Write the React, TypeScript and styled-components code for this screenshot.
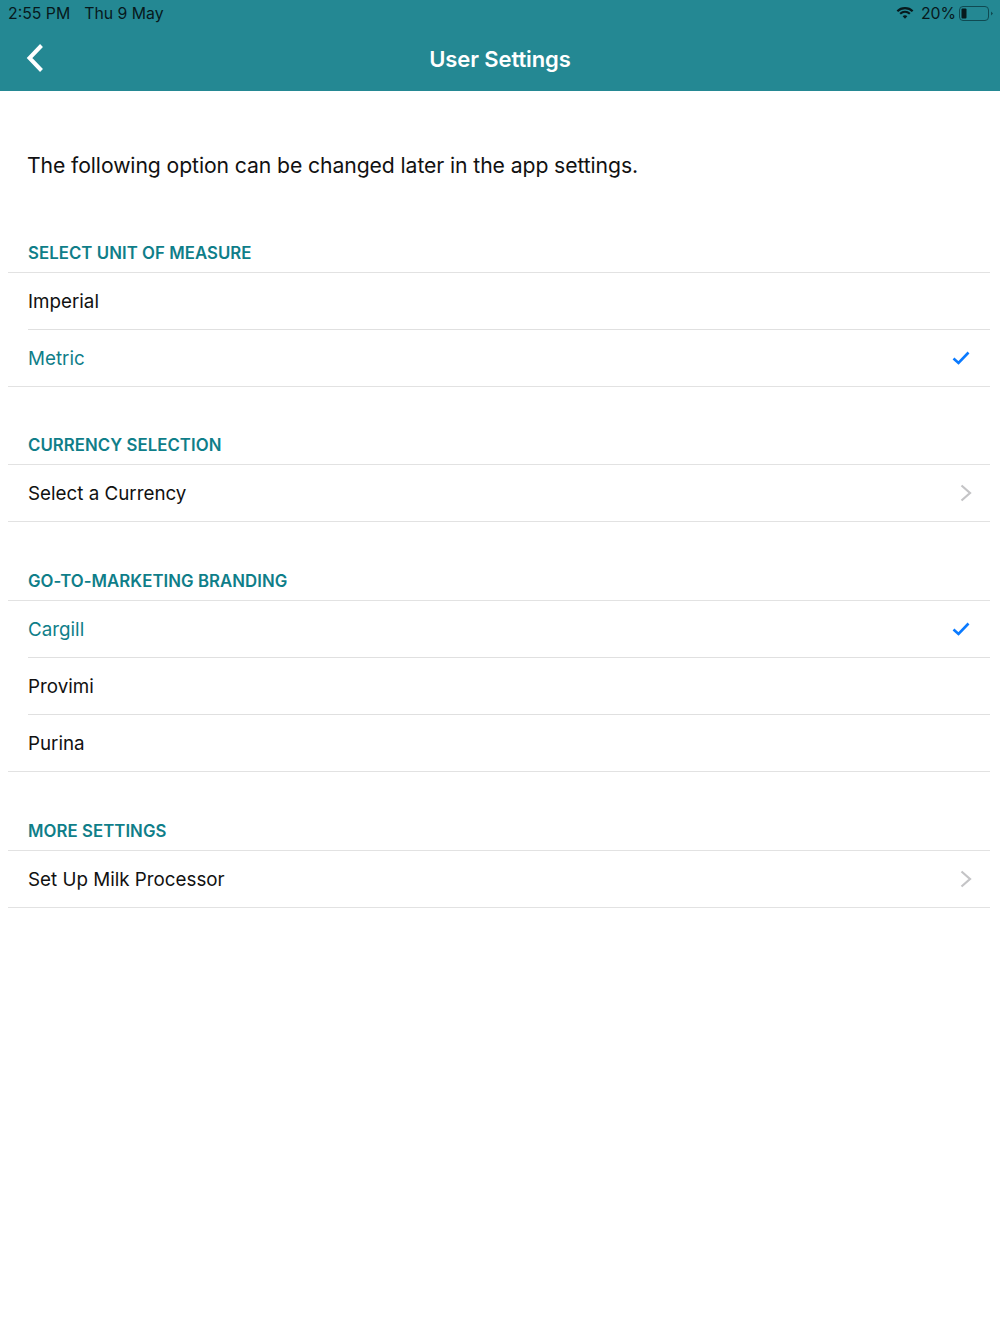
import React from 'react';
import styled, { createGlobalStyle } from 'styled-components';

const GlobalStyle = createGlobalStyle`
  html, body {
    margin: 0;
    padding: 0;
    background: #fff;
    font-family: Inter, "Noto Sans", sans-serif;
  }
`;

const Page = styled.div`
  width: 1000px;
  height: 1334px;
  background: #fff;
  overflow: hidden;
`;

const Header = styled.header`
  height: 91px;
  background: #248893;
  box-sizing: border-box;
  display: flex;
  flex-direction: column;
`;

const StatusBar = styled.div`
  height: 26px;
  padding: 0 7px 0 8px;
  display: flex;
  align-items: center;
  justify-content: space-between;
  font-size: 15.8px;
  color: #07191c;
`;

const StatusGroup = styled.div`
  display: flex;
  align-items: center;
  gap: 14px;
`;

const StatusRight = styled.div`
  display: flex;
  align-items: center;
  gap: 3px;
`;

const WifiSlot = styled.div`
  display: flex;
  margin-right: 4px;
`;

const NavBar = styled.div`
  flex: 1;
  display: grid;
  grid-template-columns: 1fr auto 1fr;
  align-items: center;
  padding: 0 26px 0 26px;
`;

const BackButton = styled.div`
  display: flex;
  align-items: center;
  margin-top: -1px;
`;

const Title = styled.h1`
  margin: 0;
  font-size: 22px;
  font-weight: 600;
  color: #fff;
  letter-spacing: -0.1px;
`;

const Intro = styled.p`
  margin: 0;
  padding: 60px 27px 0;
  height: 91px;
  box-sizing: content-box;
  font-size: 21.2px;
  line-height: 28px;
  color: #111;
  letter-spacing: -0.1px;
`;

const Sections = styled.div`
  display: flex;
  flex-direction: column;
  gap: 47px;
  padding: 0 10px 0 8px;
`;

const SectionBlock = styled.section`
  &:nth-child(n + 3) {
    margin-top: 1px;
  }
`;

const SectionTitle = styled.div`
  padding: 0 20px;
  height: 30px;
  line-height: 22px;
  font-size: 16.8px;
  font-weight: 600;
  color: #0f7e89;
  letter-spacing: 0.05px;
`;

const List = styled.div`
  border-top: 1px solid #e2e2e2;
  border-bottom: 1px solid #e2e2e2;
`;

const Row = styled.div<{ $selected?: boolean }>`
  height: 56px;
  box-sizing: border-box;
  margin-left: 20px;
  padding-right: 20px;
  display: flex;
  align-items: center;
  justify-content: space-between;
  font-size: 18.8px;
  color: ${(p) => (p.$selected ? '#0f7e89' : '#111')};
  & + & {
    border-top: 1px solid #e0e0e0;
    height: 57px;
  }
`;

const Check = () => (
  <svg width="18" height="14" viewBox="0 0 18 14" fill="none" style={{ display: 'block' }}>
    <path d="M1.5 7.5 L6.5 12 L16.5 1.5" stroke="#0a7aff" strokeWidth="2.6" />
  </svg>
);

const Chevron = () => (
  <svg width="12" height="18" viewBox="0 0 12 18" fill="none" style={{ marginRight: -2 }}>
    <path d="M1.5 1.5 L10 9 L1.5 16.5" stroke="#c4c4c6" strokeWidth="2.2" />
  </svg>
);

const BackIcon = () => (
  <svg width="18" height="30" viewBox="0 0 18 30" fill="none" style={{ display: 'block' }}>
    <path d="M15.5 2.5 L3.5 15 L15.5 27.5" stroke="#fff" strokeWidth="4" />
  </svg>
);

const WifiIcon = () => (
  <svg width="18" height="14" viewBox="0 0 20 15" fill="none" style={{ display: 'block' }}>
    <path d="M1.5 5.5 C6 1 14 1 18.5 5.5" stroke="#07191c" strokeWidth="2.4" />
    <path d="M4.6 8.4 C7.8 5.6 12.2 5.6 15.4 8.4" stroke="#07191c" strokeWidth="2.4" />
    <path d="M7.4 11 C8.9 9.8 11.1 9.8 12.6 11 L10 13.8 Z" fill="#07191c" />
  </svg>
);

const BatteryIcon = () => (
  <svg width="34" height="15" viewBox="0 0 34 15" fill="none" style={{ display: 'block' }}>
    <rect x="0.5" y="0.5" width="29" height="14" rx="3.5" stroke="#0f4a52" />
    <rect x="2.5" y="2.5" width="5" height="10" rx="1" fill="#07191c" />
    <path d="M32 5.5 L34 7.5 L32 9.5 Z" fill="#0f4a52" />
  </svg>
);

type Item = { label: string; selected?: boolean; accessory?: 'check' | 'chevron' };
type Section = { title: string; items: Item[] };

const sections: Section[] = [
  {
    title: 'SELECT UNIT OF MEASURE',
    items: [{ label: 'Imperial' }, { label: 'Metric', selected: true, accessory: 'check' }]
  },
  {
    title: 'CURRENCY SELECTION',
    items: [{ label: 'Select a Currency', accessory: 'chevron' }]
  },
  {
    title: 'GO-TO-MARKETING BRANDING',
    items: [
      { label: 'Cargill', selected: true, accessory: 'check' },
      { label: 'Provimi' },
      { label: 'Purina' }
    ]
  },
  {
    title: 'MORE SETTINGS',
    items: [{ label: 'Set Up Milk Processor', accessory: 'chevron' }]
  }
];

const App: React.FC = () => (
  <Page>
    <GlobalStyle />
    <Header>
      <StatusBar>
        <StatusGroup>
          <span>2:55 PM</span>
          <span>Thu 9 May</span>
        </StatusGroup>
        <StatusRight>
          <WifiSlot>
            <WifiIcon />
          </WifiSlot>
          <span>20%</span>
          <BatteryIcon />
        </StatusRight>
      </StatusBar>
      <NavBar>
        <BackButton>
          <BackIcon />
        </BackButton>
        <Title>User Settings</Title>
      </NavBar>
    </Header>
    <Intro>The following option can be changed later in the app settings.</Intro>
    <Sections>
      {sections.map((section) => (
        <SectionBlock key={section.title}>
          <SectionTitle>{section.title}</SectionTitle>
          <List>
            {section.items.map((item) => (
              <Row key={item.label} $selected={item.selected}>
                <span>{item.label}</span>
                {item.accessory === 'check' && <Check />}
                {item.accessory === 'chevron' && <Chevron />}
              </Row>
            ))}
          </List>
        </SectionBlock>
      ))}
    </Sections>
  </Page>
);

export default App;
